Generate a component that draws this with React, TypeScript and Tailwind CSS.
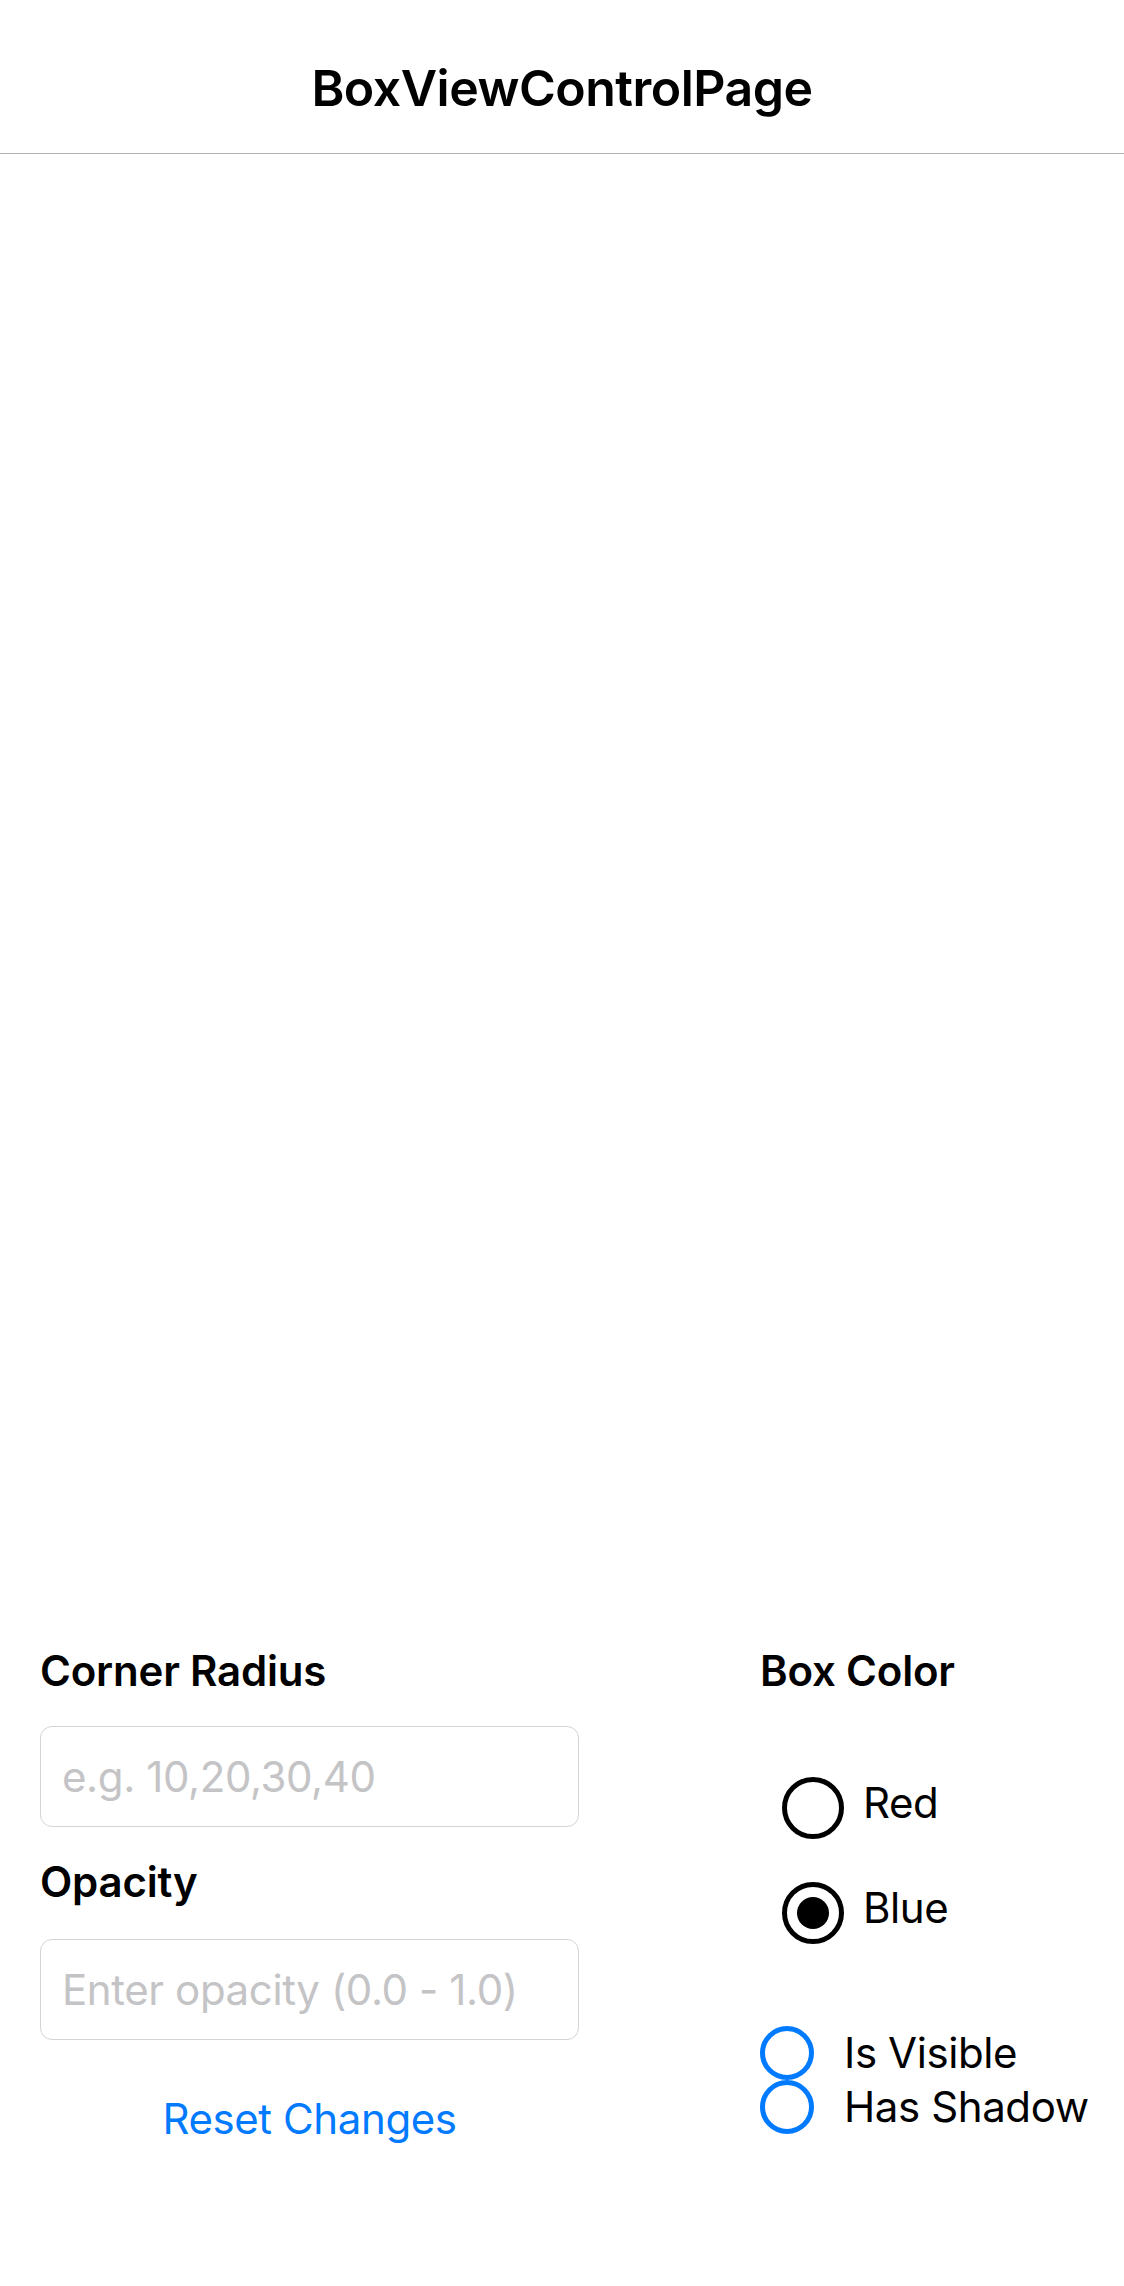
import { useState } from 'react';

const font = { fontFamily: 'Inter, "Noto Sans", sans-serif' };

function Radio({ label, checked, onClick }: { label: string; checked: boolean; onClick: () => void }) {
  return (
    <button onClick={onClick} className="flex items-center h-[62px] ml-[22px] cursor-pointer">
      <span className="w-[62px] h-[62px] rounded-full border-[5px] border-black flex items-center justify-center">
        {checked && <span className="w-[32px] h-[32px] rounded-full bg-black"></span>}
      </span>
      <span className="ml-[19px] pb-[10px] text-[42px] leading-[50px] tracking-[-0.4px] text-black">{label}</span>
    </button>
  );
}

function Check({ label, checked, onClick }: { label: string; checked: boolean; onClick: () => void }) {
  return (
    <button onClick={onClick} className="flex items-center h-[54px] cursor-pointer">
      <span className="w-[54px] h-[54px] rounded-full border-[5px] border-[#007aff] flex items-center justify-center">
        {checked && <span className="w-[28px] h-[28px] rounded-full bg-[#007aff]"></span>}
      </span>
      <span className="ml-[30px] text-[42px] leading-[50px] tracking-[-0.4px] text-black">{label}</span>
    </button>
  );
}

export default function App() {
  const [color, setColor] = useState<'red' | 'blue'>('blue');
  const [visible, setVisible] = useState(false);
  const [shadow, setShadow] = useState(false);
  const [radius, setRadius] = useState('');
  const [opacity, setOpacity] = useState('');

  const reset = () => {
    setColor('blue');
    setVisible(false);
    setShadow(false);
    setRadius('');
    setOpacity('');
  };

  return (
    <div className="w-full min-h-[2286px] bg-white flex flex-col" style={font}>
      {/* Nav bar */}
      <header className="h-[154px] border-b border-[#b2b2b2] flex justify-center pt-[58px]">
        <h1 className="text-[50px] leading-[60px] font-semibold text-black tracking-[-0.5px]">BoxViewControlPage</h1>
      </header>

      {/* Box area (empty) */}
      <div className="flex-1"></div>

      {/* Controls */}
      <div className="flex pl-[40px] pb-[142px]">
        <div className="w-[539px] flex flex-col">
          <label className="text-[42px] leading-[50px] font-semibold text-black tracking-[-0.2px]">Corner Radius</label>
          <input
            value={radius}
            onChange={(e) => setRadius(e.target.value)}
            placeholder="e.g. 10,20,30,40"
            className="mt-[30px] h-[101px] w-full rounded-[12px] border border-[#d4d4d4] px-[21px] text-[42px] tracking-[-0.4px] text-black placeholder:text-[#c4c4c6] outline-none"
          />
          <label className="mt-[30px] text-[42px] leading-[50px] font-semibold text-black tracking-[-0.2px]">Opacity</label>
          <input
            value={opacity}
            onChange={(e) => setOpacity(e.target.value)}
            placeholder="Enter opacity (0.0 - 1.0)"
            className="mt-[32px] h-[101px] w-full rounded-[12px] border border-[#d4d4d4] px-[21px] text-[42px] tracking-[-0.4px] text-black placeholder:text-[#c4c4c6] outline-none"
          />
          <button onClick={reset} className="mt-[54px] text-[42px] leading-[50px] tracking-[-0.4px] text-[#007aff] cursor-pointer">
            Reset Changes
          </button>
        </div>

        <div className="ml-[181px] flex flex-col">
          <span className="text-[42px] leading-[50px] font-semibold text-black tracking-[-0.2px]">Box Color</span>
          <div className="mt-[81px] flex flex-col gap-[43px]">
            <Radio label="Red" checked={color === 'red'} onClick={() => setColor('red')} />
            <Radio label="Blue" checked={color === 'blue'} onClick={() => setColor('blue')} />
          </div>
          <div className="mt-[82px] flex flex-col">
            <Check label="Is Visible" checked={visible} onClick={() => setVisible(!visible)} />
            <Check label="Has Shadow" checked={shadow} onClick={() => setShadow(!shadow)} />
          </div>
        </div>
      </div>
    </div>
  );
}
